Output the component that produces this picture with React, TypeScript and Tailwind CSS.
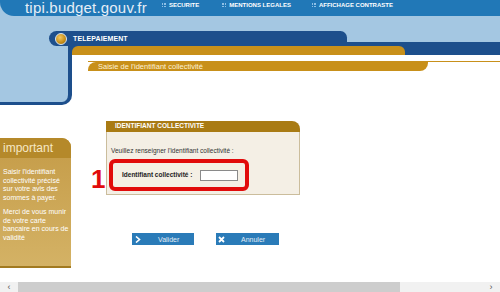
import React from 'react';

const Dots: React.FC = () => (
  <span className="inline-grid grid-cols-2 gap-[1px] mr-[3px]">
    <span className="w-[1.5px] h-[1.5px] bg-[#8fc0e6]" />
    <span className="w-[1.5px] h-[1.5px] bg-[#8fc0e6]" />
    <span className="w-[1.5px] h-[1.5px] bg-[#8fc0e6]" />
    <span className="w-[1.5px] h-[1.5px] bg-[#8fc0e6]" />
  </span>
);

const App: React.FC = () => {
  return (
    <div className="w-[500px] h-[292px] overflow-hidden bg-white flex flex-col font-['Liberation_Sans',Arial,sans-serif]">
      {/* bandeau du haut */}
      <div className="bg-[#a4c7e2]">
        <div className="h-[16px] bg-[#2178b7] rounded-bl-[14px] flex items-start">
          <span className="ml-[25px] mt-[-1px] text-[15px] leading-[17px] text-[#e6eef6] tracking-[0.2px]">tipi.budget.gouv.fr</span>
          <div className="flex items-center ml-[15px] mt-[2px] text-[6px] leading-[6px] font-bold text-white">
            <span className="flex items-center"><Dots />SECURITE</span>
            <span className="flex items-center ml-[23px]"><Dots />MENTIONS LEGALES</span>
            <span className="flex items-center ml-[21px]"><Dots />AFFICHAGE CONTRASTE</span>
          </div>
        </div>
      </div>
      <div className="h-[15px] bg-[#a4c7e2]" />

      {/* barre TELEPAIEMENT */}
      <div className="h-[15px] flex bg-[#a4c7e2]">
        <div className="w-[49px]" />
        <div className="w-[298px] bg-[#1d4f8c] rounded-l-[8px] rounded-tr-[7px] flex items-center">
          <span className="ml-[6px] w-[12px] h-[12px] rounded-full border border-[#d9e6f2] bg-[radial-gradient(circle_at_40%_35%,#f3c760,#c48c17_60%,#8a5f0c)]" />
          <span className="ml-[6px] text-[7px] font-bold text-white leading-none tracking-[0.1px]">TELEPAIEMENT</span>
        </div>
        <div className="flex-1 flex flex-col">
          <div className="flex-1" />
          <div className="h-[4px] bg-[#1d4f8c]" />
        </div>
      </div>

      <div className="flex-1 flex">
        {/* colonne gauche */}
        <div className="w-[72px] flex flex-col">
          <div className="h-[59px] bg-[#a4c7e2] border-r-[4px] border-b-[3px] border-[#1d4f8c] rounded-br-[10px]" />
          <div className="mt-[33px] w-[71px] h-[130px] flex flex-col bg-[#c9a24f] border-b-[2px] border-[#a27a20] rounded-tr-[9px] overflow-hidden">
            <div className="h-[20px] bg-[#b5892a] pl-[3px] flex items-center text-[12px] text-[#f6e8c4] leading-none">important</div>
            <div className="flex-1 bg-[linear-gradient(#c79f4c,#d4b265)] pl-[3px] pr-[2px] pt-[10px] text-[7px] leading-[8.5px] text-white">
              <p>Saisir l'identifiant collectivité précisé sur votre avis des sommes à payer.</p>
              <p className="mt-[6px]">Merci de vous munir de votre carte bancaire en cours de validité</p>
            </div>
          </div>
        </div>

        {/* contenu */}
        <div className="flex-1 flex flex-col">
          <div className="h-[9px] flex bg-[#1d4f8c]">
            <div className="w-[333px] h-full bg-[#c8901a] rounded-tl-[6px] rounded-tr-[6px]" />
          </div>
          <div className="mt-[6px] ml-[16px] border-t border-[#c8901a]">
            <div className="w-[340px] h-[9px] bg-[#c8901a] rounded-tl-[8px] rounded-br-[8px] pl-[10px] flex items-center text-[7.5px] text-[#fdf2d6] leading-none">
              Saisie de l'identifiant collectivité
            </div>
          </div>

          {/* cadre identifiant */}
          <div className="relative mt-[50px] ml-[34px] w-[194px]">
            <div className="h-[11px] bg-[#a97b14] rounded-tr-[8px] pl-[9px] flex items-center text-[6.5px] font-bold text-white leading-none">
              IDENTIFIANT COLLECTIVITE
            </div>
            <div className="h-[63px] bg-[#f4efe5] border-x border-b border-[#cbbd9c] pl-[4px] pt-[16px] text-[6.5px] text-[#333] leading-none">
              <div>Veuillez renseigner l'identifiant collectivité :</div>
              <div className="mt-[15px] ml-[11px] flex items-center">
                <span className="font-bold text-[#222]">Identifiant collectivité :</span>
                <span className="ml-[8px] w-[38px] h-[11px] bg-white border border-[#8a8a8a]" />
              </div>
            </div>
            {/* annotation */}
            <div className="absolute left-[3px] top-[38px] w-[140px] h-[32px] border-[4px] border-[#e10b0b] rounded-[6px]" />
            <div className="absolute left-[-15px] top-[45px] text-[26px] font-bold text-[#e10b0b] leading-none">1</div>
          </div>

          {/* boutons */}
          <div className="mt-[38px] ml-[60px] flex gap-[22px] text-[7px] text-[#e4edf5] leading-none">
            <div className="w-[62px] h-[12px] bg-[#2a7bb8] flex items-center">
              <svg width="6" height="7" viewBox="0 0 6 7" className="ml-[3px]"><path d="M1 0.5 L4.5 3.5 L1 6.5" stroke="white" strokeWidth="1.6" fill="none" /></svg>
              <span className="ml-[17px]">Valider</span>
            </div>
            <div className="w-[63px] h-[12px] bg-[#2a7bb8] flex items-center">
              <svg width="7" height="7" viewBox="0 0 7 7" className="ml-[2px]"><path d="M1 1 L6 6 M6 1 L1 6" stroke="white" strokeWidth="1.8" fill="none" /></svg>
              <span className="ml-[16px]">Annuler</span>
            </div>
          </div>
        </div>
      </div>

      {/* barre de défilement */}
      <div className="h-[10px] bg-[#f1f1f1] flex items-center">
        <span className="w-[18px] text-center text-[9px] leading-none text-[#555]">‹</span>
        <div className="w-[382px] h-full bg-[#cdcdcd]" />
        <div className="flex-1" />
        <span className="w-[18px] text-center text-[9px] leading-none text-[#555]">›</span>
      </div>
    </div>
  );
};

export default App;
